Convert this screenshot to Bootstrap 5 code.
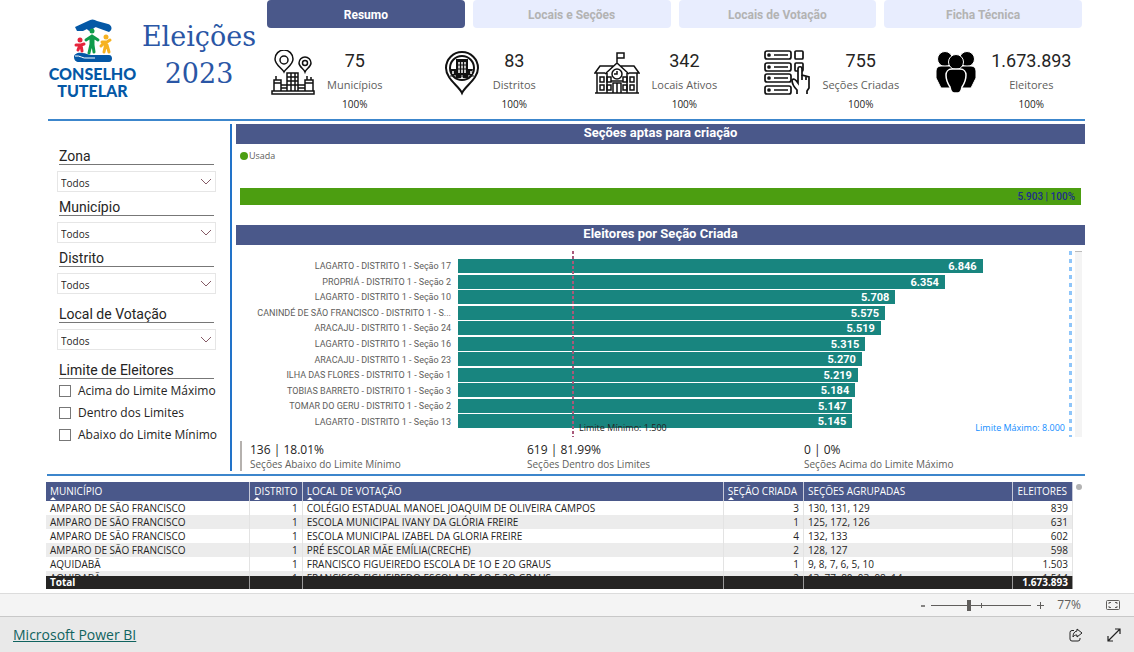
<!DOCTYPE html>
<html lang="pt-BR">
<head>
<meta charset="utf-8">
<meta name="viewport" content="width=device-width, initial-scale=1">
<title>Eleições 2023 - Conselho Tutelar</title>
<link href="https://cdn.jsdelivr.net/npm/bootstrap@5.3.0/dist/css/bootstrap.min.css" rel="stylesheet">
<style>
  :root { --navy: #4a588a; --rule: #3c86cc; --din: Roboto, "Liberation Sans", sans-serif; --segoe: "Open Sans", "Noto Sans", sans-serif; }
  body { font-family: var(--segoe); color: #252423; font-size: 12px; line-height: 16px; background: #fff; }
  .report { padding: 0 49px 3px 48px; }
  .report-head { height: 121px; border-bottom: 2px solid var(--rule); }
  .brand { width: 89px; padding-top: 19px; color: #0458a6; font: 900 16px/17px Lato, sans-serif; }
  .brand svg { display: block; margin: 0 auto 2px; }
  .headline { width: 120px; margin: 0 4px 0 2px; padding-top: 18px; color: #2a56a5; font: 400 27px/37px "DejaVu Serif", serif; }
  .tabs { gap: 8px; padding-right: 3px; }
  .tabs .btn { flex: 1 1 0; height: 28px; padding: 0; border: 0; border-radius: 4px; font: 700 12px/30px var(--din); background: #e8edfe; color: #b3b3b3; }
  .tabs .btn.active { background: var(--navy); color: #fff; }
  .kpis { display: grid; grid-template-columns: 172fr 151fr 171fr 169fr 152fr; padding: 22px 0 0 4px; }
  .kpi { gap: 12px; }
  .kpi b { display: block; font: 400 18px/22px var(--din); }
  .kpi span { display: block; font-size: 11px; line-height: 16px; color: #605e5c; margin: 5px 0 4px; }
  .kpi i { display: block; font: 400 10px/14px var(--segoe); }
  .slicers { width: 184px; padding: 24px 16px 10px 11px; border-right: 2px solid #2273c9; }
  .slicers label.cap, .slicers legend { display: block; float: none; font: 400 14px/16px var(--din); border-bottom: 1px solid #777; margin: 0 0 6px; width: 155px; height: 17px; }
  .slicers legend { margin-bottom: 4px; }
  .slicers .form-select { --bs-form-select-bg-img: url("data:image/svg+xml,%3csvg xmlns='http://www.w3.org/2000/svg' viewBox='0 0 12 8'%3e%3cpath fill='none' stroke='%23855b66' d='M1 1l5 5 5-5'/%3e%3c/svg%3e"); width: 159px; height: 21px; margin: 0 0 7px -2px; padding: 2px 20px 0 3px; border: 1px solid #e6e6e6; border-radius: 0; font-size: 10px; line-height: 16px; color: #252423; background-position: right 3px center; background-size: 12px 8px; }
  .slicers .form-select.wide-gap { margin-bottom: 12px; }
  .slicers .form-check { min-height: 0; margin: 0 0 6px; padding: 0; height: 16px; display: flex; align-items: center; gap: 7px; white-space: nowrap; }
  .slicers .form-check-input { float: none; flex: none; width: 12px; height: 12px; margin: 0; border: 1px solid #777; border-radius: 0; }
  .middle { padding: 3px 0; }
  .board { padding-left: 4px; }
  .band { height: 20px; margin: 0; background: var(--navy); color: #fff; text-align: center; font: 700 13px/17px var(--din); }
  .legend-line { padding: 4px 0 0 4px; height: 44px; font-size: 9px; color: #605e5c; }
  .dot { display: inline-block; width: 8px; height: 8px; border-radius: 50%; background: #4c9e11; margin-right: 1px; vertical-align: -1px; }
  .used { height: 17px; margin: 0 4px 20px; padding-right: 6px; background: #4c9e11; color: #1d2c8c; text-align: right; font: 500 10px/17px var(--din); }
  .chart { height: 192px; padding-top: 6px; padding-right: 3px; }
  .names, .bars { display: grid; grid-template-rows: repeat(11, 1fr); padding: 8px 0 7px; }
  .names { width: 222px; padding-right: 7px; text-align: right; font: 400 9px/15px var(--din); color: #605e5c; white-space: nowrap; align-items: center; }
  .bars { position: relative; }
  .bars div { background: #18857f; color: #fff; height: 14px; padding-right: 6px; text-align: right; font: 700 11px/16px var(--din); }
  .mark-line { position: absolute; top: 0; bottom: 0; width: 2px; background: repeating-linear-gradient(#a8597a 0 3px, transparent 3px 5px); }
  .mark-line.max { width: 3px; right: -1px; background: repeating-linear-gradient(#8ec5f9 0 4px, transparent 4px 8px); }
  .mark-line em { position: absolute; bottom: 1px; font: 400 9px/16px var(--segoe); white-space: nowrap; }
  .scroll-track { width: 7px; margin-left: 4px; background: #f4f4f4; border-top: 1px solid #bbb; }
  .totals { margin: 4px 4px 0; padding-left: 8px; border-left: 2px solid #b5b1ae; color: #605e5c; font-size: 10px; line-height: 13px; }
  .totals b { display: block; font-weight: 400; font-size: 12px; line-height: 17px; color: #252423; }
  .lower { border-top: 2px solid var(--rule); margin-left: -1px; padding: 6px 0 1px; }
  .grid-box { margin-left: -1px; }
  .grid-scroll { height: 94px; overflow: hidden; }
  .grid-box table { width: 100%; table-layout: fixed; border-collapse: separate; border-spacing: 0; font-size: 10px; line-height: 14px; }
  .grid-box th, .grid-box td { height: 14px; padding: 0 4px; white-space: nowrap; border-right: 1px solid #e3e3e3; }
  .grid-box tbody tr:nth-child(even) td { background: #ececec; }
  .grid-box thead th { position: sticky; top: 0; height: 19px; padding: 2px 4px 3px; background: var(--navy); color: #fff; font-weight: 400; border-color: #c6c9d8; }
  .grid-box .sum td { height: 13px; line-height: 13px; background: #252423; color: #fff; font-weight: 700; border-color: #999; }
  .sorted::after { content: ""; position: absolute; left: 4px; bottom: 1px; border: 3px solid transparent; border-top: 0; border-bottom-color: #fff; }
  .grip { width: 6px; height: 6px; border-radius: 50%; background: #b3b3b3; margin: 2px 3px 0; }
  .zoombar { height: 24px; padding: 0 13px; background: #f4f4f4; border-top: 1px solid #dcdcdc; border-bottom: 1px solid #c8c8c8; color: #605e5c; }
  .zoombar button, .embed button { border: 0; padding: 0; background: none; color: inherit; display: flex; align-items: center; justify-content: center; }
  .zoombar span { margin-left: 12px; }
  .zoombar input { appearance: none; width: 100px; height: 12px; margin: 0 5px; background: linear-gradient(#605e5c, #605e5c) 0 50% / 100% 1px no-repeat, linear-gradient(#605e5c, #605e5c) 50% 50% / 1px 5px no-repeat; }
  .zoombar input::-webkit-slider-thumb { appearance: none; width: 4px; height: 11px; background: #605e5c; border: 0; }
  .embed { flex: 1 0 36px; padding: 0 13px; background: #e9e9e9; }
  .embed a { color: #10635f; font-size: 14px; line-height: 20px; }
</style>
</head>
<body class="d-flex flex-column min-vh-100">
<main class="report">
  <header class="report-head d-flex">
    <div class="brand text-center">
      <svg width="40" height="44" viewBox="0 0 40 44" aria-hidden="true">
        <path fill="#0458a6" d="M2 8L15 2c3-2 6-2 9 0l11 3c4 1 5 6 1 8l-11-4c-2-1-3-1-5 1-2 3-5 2-6 0l-4 2-6 0zM1 38c0-3 4-5 8-4 4 0 6 2 10 2h17c4 0 4 7 0 7H6c-3 0-5-2-5-5z"/>
        <path fill="none" stroke="#fff" d="M2 37c5-1 8 3 12 2h8"/>
        <g fill="none" stroke-linecap="round">
          <path stroke="#e5243b" stroke-width="3" d="M3 26l5 0 3-1M7 26l-2 5M8 26l1 6"/>
          <path stroke="#f6b221" stroke-width="3" d="M29 23l5 0 3-2M33 24l-2 9M34 26l2 7M28 27l3-3"/>
          <path stroke="#0f9b4b" stroke-width="3" d="M13 21l6-4 6 4M18 18v7l-2 9M20 18v8l1 7M19 18v10"/>
        </g>
        <circle cx="7" cy="21" r="2.500" fill="#e5243b"/><circle cx="33" cy="18" r="2.500" fill="#f6b221"/><circle cx="19" cy="12" r="2.500" fill="#0f9b4b"/>
      </svg>
      CONSELHO<br>TUTELAR
    </div>
    <h1 class="headline text-center">Eleições 2023</h1>
    <div class="flex-grow-1 ps-1">
      <nav class="tabs d-flex">
        <button class="btn active" type="button">Resumo</button>
        <button class="btn" type="button">Locais e Seções</button>
        <button class="btn" type="button">Locais de Votação</button>
        <button class="btn" type="button">Ficha Técnica</button>
      </nav>
      <div class="kpis text-center">
        <div class="kpi d-flex">
          <svg width="44" height="46" viewBox="0 0 44 46" fill="none" stroke="#111" stroke-width="1.500" aria-hidden="true"><path d="M13 22c-2-4-9-7-9-13a9 9 0 0 1 18 0c0 6-7 9-9 13zM34 22c-1-3-6-5-6-9a6 6 0 0 1 12 0c0 4-5 6-6 9z"/><circle cx="13" cy="10" r="4"/><circle cx="34" cy="13" r="2.500"/><path d="M1 41h42v3H1zM16 41V23h11v18M16 27h11M16 31h11M16 35h11M20 23v18M24 23v18M3 41V30h7v11M34 41V30h8v11M5 30v-4M36 30v-4M40 30v-3M10 35h6M27 35h7M10 38h6M27 38h7M3 33h7M34 33h8"/></svg>
          <div><b>75</b><span>Municípios</span><i>100%</i></div>
        </div>
        <div class="kpi d-flex">
          <svg width="38" height="46" viewBox="0 0 38 46" fill="none" stroke="#111" stroke-width="2" aria-hidden="true"><path d="M19 43C16 36 3 29 3 18a16 16 0 0 1 32 0c0 11-13 18-16 25z"/><circle cx="19" cy="18" r="12"/><path fill="#111" stroke="none" d="M13 9h12v19H13zM8 19h5v6H8zM25 19h5l-2 6h-3z"/><path stroke="#fff" stroke-width="1.500" d="M16 12v11M19 12v11M22 12v11M19 25v3M10 21v3M28 21v3"/><path stroke-width="1" d="M14 15h10M14 19h10M7 26h24"/></svg>
          <div><b>83</b><span>Distritos</span><i>100%</i></div>
        </div>
        <div class="kpi d-flex">
          <svg width="46" height="46" viewBox="0 0 46 46" fill="none" stroke="#111" stroke-width="1.500" aria-hidden="true"><path d="M1 43h44M3 43V23M43 43V23M23 13V3h7v5h-7M11 24L23 13l12 11M13 43V23M33 43V23M12 16L6 16 1 23h10M34 16h6l5 7H35M12 16h8M26 16h8M19 43V33h8v10M23 33v10M17 31h12"/><circle cx="23" cy="24" r="5"/><path d="M23 21v3h-3M6 27h4v5H6zM6 35h4v5H6zM13 27h4v5h-4zM13 35h4v5h-4zM29 27h4v5h-4zM29 35h4v5h-4zM36 27h4v5h-4zM36 35h4v5h-4z"/></svg>
          <div><b>342</b><span>Locais Ativos</span><i>100%</i></div>
        </div>
        <div class="kpi d-flex">
          <svg width="46" height="46" viewBox="0 0 46 46" fill="none" stroke="#111" stroke-width="1.700" aria-hidden="true"><rect x="1" y="1" width="26" height="8" rx="2"/><rect x="1" y="13" width="26" height="8" rx="2"/><rect x="1" y="24" width="26" height="8" rx="2"/><rect x="1" y="36" width="26" height="8" rx="2"/><rect x="31" y="1" width="8" height="8" rx="1"/><rect x="31" y="13" width="8" height="8" rx="1"/><path d="M10 5h14M10 17h14M10 28h14M10 40h14"/><circle cx="5" cy="5" r="1"/><circle cx="5" cy="17" r="1"/><circle cx="5" cy="28" r="1"/><circle cx="5" cy="40" r="1"/><path fill="#fff" d="M33 44v-4c-2-2-5-6-5-10 2-2 4 0 6 3V19c0-3 4-3 4 0v6l7 2v11l-2 3v3"/><path d="M38 25v5M42 27v3"/></svg>
          <div><b>755</b><span>Seções Criadas</span><i>100%</i></div>
        </div>
        <div class="kpi d-flex">
          <svg width="46" height="46" viewBox="0 0 46 46" aria-hidden="true"><g stroke="#fff"><circle cx="12" cy="9" r="7.500"/><circle cx="34" cy="9" r="7.500"/><path d="M8 16h12v22H8c-2-3-3-7-5-10V21c0-3 2-5 5-5zM38 16H26v22h12c2-3 3-7 5-10V21c0-3-2-5-5-5z"/><circle cx="23" cy="12" r="7.500"/><path stroke-width="1.500" d="M19 19h8c4 0 6 3 6 6 0 5-2 9-4 12-1 6-3 6-6 6s-5 0-6-6c-2-3-4-7-4-12 0-3 2-6 6-6z"/></g></svg>
          <div><b>1.673.893</b><span>Eleitores</span><i>100%</i></div>
        </div>
      </div>
    </div>
  </header>

  <div class="middle d-flex">
    <form class="slicers flex-shrink-0">
      <label class="cap" for="zona">Zona</label>
      <select class="form-select" id="zona"><option>Todos</option></select>
      <label class="cap" for="municipio">Município</label>
      <select class="form-select" id="municipio"><option>Todos</option></select>
      <label class="cap" for="distrito">Distrito</label>
      <select class="form-select wide-gap" id="distrito"><option>Todos</option></select>
      <label class="cap" for="local">Local de Votação</label>
      <select class="form-select wide-gap" id="local"><option>Todos</option></select>
      <fieldset>
        <legend>Limite de Eleitores</legend>
        <div class="form-check"><input class="form-check-input" type="checkbox" id="acima"><label for="acima">Acima do Limite Máximo</label></div>
        <div class="form-check"><input class="form-check-input" type="checkbox" id="dentro"><label for="dentro">Dentro dos Limites</label></div>
        <div class="form-check mb-0"><input class="form-check-input" type="checkbox" id="abaixo"><label for="abaixo">Abaixo do Limite Mínimo</label></div>
      </fieldset>
    </form>

    <section class="board flex-grow-1">
      <h2 class="band">Seções aptas para criação</h2>
      <div class="legend-line"><span class="dot"></span>Usada</div>
      <div class="used">5.903 | 100%</div>
      <h2 class="band">Eleitores por Seção Criada</h2>
      <div class="chart d-flex">
        <div class="names">
          <span>LAGARTO - DISTRITO 1 - Seção 17</span>
          <span>PROPRIÁ - DISTRITO 1 - Seção 2</span>
          <span>LAGARTO - DISTRITO 1 - Seção 10</span>
          <span>CANINDÉ DE SÃO FRANCISCO - DISTRITO 1 - S...</span>
          <span>ARACAJU - DISTRITO 1 - Seção 24</span>
          <span>LAGARTO - DISTRITO 1 - Seção 16</span>
          <span>ARACAJU - DISTRITO 1 - Seção 23</span>
          <span>ILHA DAS FLORES - DISTRITO 1 - Seção 1</span>
          <span>TOBIAS BARRETO - DISTRITO 1 - Seção 3</span>
          <span>TOMAR DO GERU - DISTRITO 1 - Seção 2</span>
          <span>LAGARTO - DISTRITO 1 - Seção 13</span>
        </div>
        <div class="bars flex-grow-1">
          <div style="width:85.575%">6.846</div>
          <div style="width:79.425%">6.354</div>
          <div style="width:71.350%">5.708</div>
          <div style="width:69.688%">5.575</div>
          <div style="width:68.988%">5.519</div>
          <div style="width:66.438%">5.315</div>
          <div style="width:65.875%">5.270</div>
          <div style="width:65.238%">5.219</div>
          <div style="width:64.800%">5.184</div>
          <div style="width:64.338%">5.147</div>
          <div style="width:64.313%">5.145</div>
          <span class="mark-line" style="left:18.600%"><em style="left:7px">Limite Mínimo: 1.500</em></span>
          <span class="mark-line max"><em style="right:7px;color:#118dff">Limite Máximo: 8.000</em></span>
        </div>
        <div class="scroll-track"></div>
      </div>
      <div class="totals row gx-0">
        <div class="col"><b>136 | 18.01%</b>Seções Abaixo do Limite Mínimo</div>
        <div class="col"><b>619 | 81.99%</b>Seções Dentro dos Limites</div>
        <div class="col"><b>0 | 0%</b>Seções Acima do Limite Máximo</div>
      </div>
    </section>
  </div>

  <section class="lower d-flex">
    <div class="grid-box flex-grow-1">
      <div class="grid-scroll">
      <table>
        <colgroup><col style="width:19.900%"><col style="width:5.100%"><col style="width:41%"><col style="width:7.800%"><col style="width:20.400%"><col style="width:5.800%"></colgroup>
        <thead><tr><th class="sorted">MUNICÍPIO</th><th class="sorted">DISTRITO</th><th class="sorted">LOCAL DE VOTAÇÃO</th><th class="sorted">SEÇÃO CRIADA</th><th>SEÇÕES AGRUPADAS</th><th>ELEITORES</th></tr></thead>
        <tbody>
          <tr><td>AMPARO DE SÃO FRANCISCO</td><td class="text-end">1</td><td>COLÉGIO ESTADUAL MANOEL JOAQUIM DE OLIVEIRA CAMPOS</td><td class="text-end">3</td><td>130, 131, 129</td><td class="text-end">839</td></tr>
          <tr><td>AMPARO DE SÃO FRANCISCO</td><td class="text-end">1</td><td>ESCOLA MUNICIPAL IVANY DA GLÓRIA FREIRE</td><td class="text-end">1</td><td>125, 172, 126</td><td class="text-end">631</td></tr>
          <tr><td>AMPARO DE SÃO FRANCISCO</td><td class="text-end">1</td><td>ESCOLA MUNICIPAL IZABEL DA GLORIA FREIRE</td><td class="text-end">4</td><td>132, 133</td><td class="text-end">602</td></tr>
          <tr><td>AMPARO DE SÃO FRANCISCO</td><td class="text-end">1</td><td>PRÉ ESCOLAR MÃE EMÍLIA(CRECHE)</td><td class="text-end">2</td><td>128, 127</td><td class="text-end">598</td></tr>
          <tr><td>AQUIDABÃ</td><td class="text-end">1</td><td>FRANCISCO FIGUEIREDO ESCOLA DE 1O E 2O GRAUS</td><td class="text-end">1</td><td>9, 8, 7, 6, 5, 10</td><td class="text-end">1.503</td></tr>
          <tr><td>AQUIDABÃ</td><td class="text-end">1</td><td>FRANCISCO FIGUEIREDO ESCOLA DE 1O E 2O GRAUS</td><td class="text-end">2</td><td>13, 77, 80, 93, 98, 14</td><td class="text-end">1.514</td></tr>
        </tbody>
      </table>
      </div>
      <table class="sum">
        <colgroup><col style="width:19.900%"><col style="width:5.100%"><col style="width:41%"><col style="width:7.800%"><col style="width:20.400%"><col style="width:5.800%"></colgroup>
        <tr><td>Total</td><td></td><td></td><td></td><td></td><td class="text-end">1.673.893</td></tr>
      </table>
    </div>
    <div class="grip flex-shrink-0"></div>
  </section>
</main>

<div class="zoombar d-flex align-items-center justify-content-end">
  <button type="button" aria-label="Reduzir"><svg width="6" height="10"><path d="M1 6h4" stroke="currentColor" stroke-width="1.500"/></svg></button>
  <input type="range" min="0" max="100" value="37" aria-label="Zoom">
  <button type="button" aria-label="Ampliar"><svg width="9" height="9"><path d="M1 4.500h7M4.500 1v7" stroke="currentColor"/></svg></button>
  <span>77%</span>
  <button type="button" class="ms-4" aria-label="Ajustar à página"><svg width="16" height="12" viewBox="0 0 16 12" fill="none" stroke="currentColor"><rect x="1.500" y="1.500" width="13" height="9" rx="1"/><path d="M6 3.500H4v1.500M10 3.500h2v1.500M6 8.500H4V7M10 8.500h2V7"/></svg></button>
</div>
<footer class="embed d-flex align-items-center">
  <a href="#">Microsoft Power BI</a>
  <button type="button" class="ms-auto" aria-label="Compartilhar"><svg width="14" height="14" viewBox="0 0 14 14" fill="none" stroke="#222"><path d="M5 2.500H3a2 2 0 0 0-2 2V11a2 2 0 0 0 2 2h6a2 2 0 0 0 2-2v-1"/><path d="M8 1l5 4-5 4V7C6 7 5 7.500 4 9c0-3 1-5.500 4-6z"/></svg></button>
  <button type="button" class="ms-4" aria-label="Tela inteira"><svg width="14" height="14" viewBox="0 0 14 14" fill="none" stroke="#222" stroke-width="1.200"><path d="M1 13L13 1M8 1h5v5M1 8v5h5"/></svg></button>
</footer>
<script src="https://cdn.jsdelivr.net/npm/bootstrap@5.3.0/dist/js/bootstrap.bundle.min.js"></script>
</body>
</html>
